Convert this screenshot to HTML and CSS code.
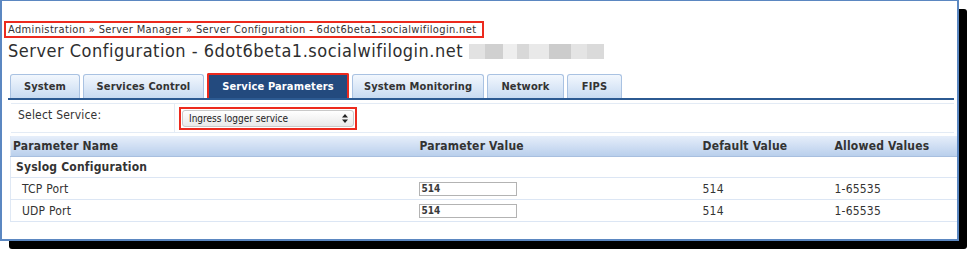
FILE: index.html
```html
<!DOCTYPE html>
<html>
<head>
<meta charset="utf-8">
<link rel="stylesheet" href="styles.css">
</head>
<body>
<div class="shot">
<div class="frame">
  <div class="crumb-wrap"><span class="crumb">Administration » Server Manager » Server Configuration - 6dot6beta1.socialwifilogin.net</span></div>
  <h1 class="title">Server Configuration - 6dot6beta1.socialwifilogin.net <span class="blur"><i class="b1"></i><i class="b2"></i><i class="b3"></i><i class="b4"></i><i class="b5"></i><i class="b6"></i><i class="b7"></i><i class="b8"></i></span></h1>
  <div class="tabs">
    <div class="tab t-system">System</div>
    <div class="tab t-control">Services Control</div>
    <div class="tab active t-params">Service Parameters</div>
    <div class="tab t-monitor">System Monitoring</div>
    <div class="tab t-network">Network</div>
    <div class="tab t-fips">FIPS</div>
  </div>
  <div class="panel">
    <div class="select-row">
      <div class="select-label">Select Service:</div>
      <div class="select-cell">
        <div class="select-outline">
          <div class="select">
            <span>Ingress logger service</span>
            <svg class="arrows" width="6" height="9" viewBox="0 0 6 9"><path d="M3 0 L6 3.5 H0 Z M3 9 L6 5.5 H0 Z" fill="#222"/></svg>
          </div>
        </div>
      </div>
    </div>
    <table class="params">
      <colgroup>
        <col class="c1"><col class="c2"><col class="c3"><col class="c4">
      </colgroup>
      <thead>
        <tr><th>Parameter Name</th><th class="h-center">Parameter Value</th><th>Default Value</th><th>Allowed Values</th></tr>
      </thead>
      <tbody>
        <tr class="group"><td colspan="4">Syslog Configuration</td></tr>
        <tr><td class="name">TCP Port</td><td><span class="input">514</span></td><td>514</td><td>1-65535</td></tr>
        <tr><td class="name">UDP Port</td><td><span class="input">514</span></td><td>514</td><td>1-65535</td></tr>
      </tbody>
    </table>
  </div>
</div>
</div>
</body>
</html>
```

FILE: styles.css
```css
html, body {
  margin: 0;
  padding: 0;
  background: #ffffff;
}
body {
  font-family: "DejaVu Sans Condensed", "DejaVu Sans", sans-serif;
  font-stretch: condensed;
  color: #333333;
}
.shot {
  position: relative;
  width: 967px;
  height: 249px;
}
.shot::before {
  content: "";
  position: absolute;
  left: 9px;
  top: 9px;
  width: 958px;
  height: 240px;
  background: #000000;
  border-radius: 3px;
}
.frame {
  position: relative;
  box-sizing: border-box;
  width: 959px;
  height: 241px;
  border: 2px solid #5b87c1;
  border-top-width: 1px;
  padding: 17px 3px 0 6px;
  background: #ffffff;
}
.crumb-wrap {
  height: 18px;
}
.crumb {
  display: inline-block;
  border: 2px solid #ec2a1e;
  padding: 1px 6px 0 2px;
  margin-left: -4px;
  font-size: 11px;
  line-height: 12px;
  letter-spacing: 0.35px;
  color: #333;
}
.title {
  margin: 3px 0 0 0;
  font-weight: normal;
  font-size: 18px;
  line-height: 24px;
  letter-spacing: 0.5px;
  color: #2e2e2e;
  height: 24px;
  display: flex;
  align-items: center;
  gap: 6px;
}
.blur {
  display: inline-flex;
  height: 15px;
  margin-top: 1px;
}
.blur i {
  display: block;
  height: 15px;
}
.b1 { width: 16px; background: #e2e2e2; }
.b2 { width: 18px; background: #d0d0d0; }
.b3 { width: 14px; background: #eeeeee; }
.b4 { width: 12px; background: #d8d8d8; }
.b5 { width: 20px; background: #e9e9e9; }
.b6 { width: 22px; background: #cccccc; }
.b7 { width: 16px; background: #e4e4e4; }
.b8 { width: 17px; background: #dadada; }

.tabs {
  display: flex;
  align-items: flex-end;
  gap: 3px;
  margin-top: 10px;
  padding-left: 2px;
  height: 25px;
  border-bottom: 2px solid #2c5a92;
}
.tab {
  box-sizing: border-box;
  height: 24px;
  border: 1px solid #a9c2e2;
  border-bottom: none;
  border-radius: 3px 3px 0 0;
  background: linear-gradient(#f2f7fd, #c8dbf2);
  font-weight: bold;
  font-size: 11px;
  letter-spacing: 0.15px;
  color: #333;
  display: flex;
  align-items: center;
  justify-content: center;
}
.t-system { width: 70px; }
.t-control { width: 121px; }
.t-params { width: 142px; }
.t-monitor { width: 132px; }
.t-network { width: 77px; }
.t-fips { width: 55px; }
.tab.active {
  height: 25px;
  background: #234a7e;
  color: #ffffff;
  border: 2px solid #ec2a1e;
  border-bottom: none;
  border-radius: 2px 2px 0 0;
}

.panel {
  padding: 3px 0 0 2px;
}
.select-row {
  display: flex;
  height: 28px;
  border-top: 1px solid #e3ebf5;
  border-bottom: 1px solid #e3ebf5;
  margin-left: 1px;
}
.select-label {
  width: 156px;
  border-right: 1px solid #e3ebf5;
  font-size: 12px;
  letter-spacing: 0.2px;
  padding: 4px 0 0 7px;
  color: #333;
}
.select-cell {
  padding: 3px 0 0 4px;
}
.select-outline {
  border: 2px solid #ec2a1e;
  width: 172px;
  height: 17px;
  padding: 1px;
  box-sizing: content-box;
}
.select {
  height: 15px;
  border: 1px solid #c9c9c9;
  border-radius: 3px;
  background: linear-gradient(#ffffff, #e9e9e9);
  font-size: 10px;
  display: flex;
  align-items: center;
  justify-content: space-between;
  padding: 0 5px 0 6px;
  color: #222;
}
.arrows {
  display: block;
}

.params {
  margin-top: 3px;
  border-collapse: collapse;
  table-layout: fixed;
  width: 946px;
  font-size: 12px;
  letter-spacing: 0.2px;
  border-left: 1px solid #dfe8f4;
}
.c1 { width: 406px; }
.c2 { width: 284px; }
.c3 { width: 132px; }
.c4 { width: 124px; }
.params th {
  height: 20px;
  padding: 0 0 0 2px;
  text-align: left;
  font-weight: bold;
  font-size: 12px;
  color: #333;
  background: linear-gradient(#e6eefa, #b9cfec);
  border-bottom: 1px solid #a8bfdf;
}
.params th.h-center {
  padding-left: 3px;
}
.params td {
  height: 21px;
  padding: 0 0 0 2px;
  border-bottom: 1px solid #dce6f4;
  color: #333;
}
.params tr.group td {
  height: 20px;
  font-weight: bold;
  padding-left: 5px;
}
.params td.name {
  padding-left: 11px;
}
.input {
  display: block;
  box-sizing: border-box;
  width: 98px;
  height: 14px;
  border: 1px solid #b3b3b3;
  font-size: 10px;
  line-height: 12px;
  letter-spacing: 0;
  padding-left: 2px;
  font-weight: bold;
  color: #3a3a3a;
  background: #fff;
}
```
